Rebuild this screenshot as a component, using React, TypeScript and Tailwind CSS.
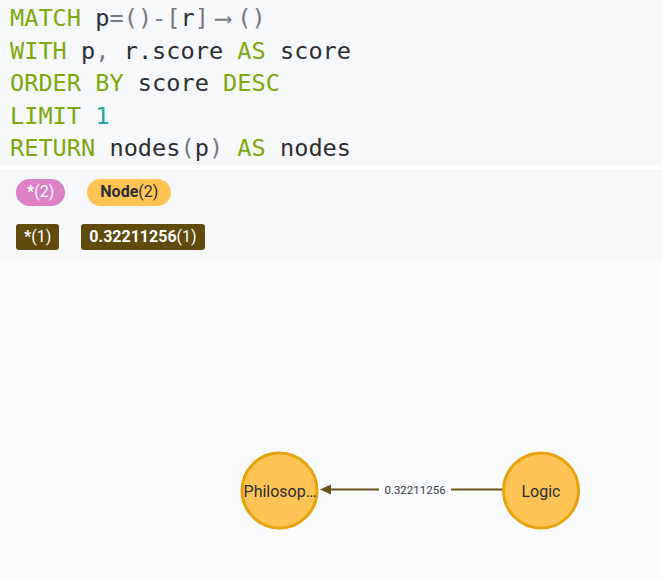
import React from "react";

const kw = "text-[#7fa70e]";
const sym = "text-[#777a80]";
const txt = "text-[#2b2d33]";
const num = "text-[#1fa99a]";

function Code() {
  return (
    <pre
      className="m-0 bg-[#f7f8fa] pl-[10px] pt-[2px] text-[23.6px] leading-[32.5px]"
      style={{ fontFamily: '"DejaVu Sans Mono", "Liberation Mono", monospace' }}
    >
      <div>
        <span className={kw}>MATCH</span> <span className={txt}>p</span>
        <span className={sym}>=()-[</span>
        <span className={txt}>r</span>
        <span className={sym}>]</span>
        <span className={`${sym} inline-block w-[2ch] text-center`}>⟶</span>
        <span className={sym}>()</span>
      </div>
      <div>
        <span className={kw}>WITH</span> <span className={txt}>p</span>
        <span className={sym}>,</span> <span className={txt}>r.score</span>{" "}
        <span className={kw}>AS</span> <span className={txt}>score</span>
      </div>
      <div>
        <span className={kw}>ORDER BY</span> <span className={txt}>score</span>{" "}
        <span className={kw}>DESC</span>
      </div>
      <div>
        <span className={kw}>LIMIT</span> <span className={num}>1</span>
      </div>
      <div>
        <span className={kw}>RETURN</span> <span className={txt}>nodes</span>
        <span className={sym}>(</span>
        <span className={txt}>p</span>
        <span className={sym}>)</span> <span className={kw}>AS</span>{" "}
        <span className={txt}>nodes</span>
      </div>
    </pre>
  );
}

function Legend() {
  return (
    <div
      className="mt-[4px] flex flex-col gap-[18px] bg-[#f7f8fa] pl-[16px] pt-[10px] pb-[9px] text-[16px]"
      style={{ fontFamily: 'Roboto, "Liberation Sans", sans-serif' }}
    >
      <div className="flex gap-[22px]">
        <span className="flex h-[27px] items-center rounded-full bg-[#de80c6] px-[11px] text-white">
          <b>*</b>(2)
        </span>
        <span className="flex h-[27px] items-center rounded-full bg-[#ffc454] px-[13px] text-[#2b2d33]">
          <b>Node</b>(2)
        </span>
      </div>
      <div className="flex gap-[22px]">
        <span className="flex h-[26px] items-center rounded-[3px] bg-[#604a0e] px-[8px] text-white">
          <b>*</b>(1)
        </span>
        <span className="flex h-[26px] items-center rounded-[3px] bg-[#604a0e] px-[8px] text-white">
          <b>0.32211256</b>(1)
        </span>
      </div>
    </div>
  );
}

function Graph() {
  return (
    <div className="relative h-[321px] bg-[#f9fbfd]">
      <svg className="absolute inset-0" width="662" height="321" style={{ fontFamily: 'Roboto, "Liberation Sans", sans-serif' }}>
        <line x1="503" y1="230.5" x2="451" y2="230.5" stroke="#6b5416" strokeWidth="2" />
        <line x1="379" y1="230.5" x2="330" y2="230.5" stroke="#6b5416" strokeWidth="2" />
        <polygon points="320,230.5 331,225.5 331,235.5" fill="#6b5416" />
        <text x="415" y="234.5" textAnchor="middle" fontSize="11.5" fill="#3a3c42">
          0.32211256
        </text>
        <circle cx="279.5" cy="231.5" r="37.5" fill="#ffc454" stroke="#e6a30e" strokeWidth="3" />
        <text x="280" y="237.5" textAnchor="middle" fontSize="16" fill="#2b2d33">
          Philosop…
        </text>
        <circle cx="541" cy="231.5" r="37.5" fill="#ffc454" stroke="#e6a30e" strokeWidth="3" />
        <text x="541" y="237.5" textAnchor="middle" fontSize="16" fill="#2b2d33">
          Logic
        </text>
      </svg>
    </div>
  );
}

export default function App() {
  return (
    <div className="h-[579px] w-[662px] overflow-hidden bg-white">
      <Code />
      <Legend />
      <Graph />
    </div>
  );
}
